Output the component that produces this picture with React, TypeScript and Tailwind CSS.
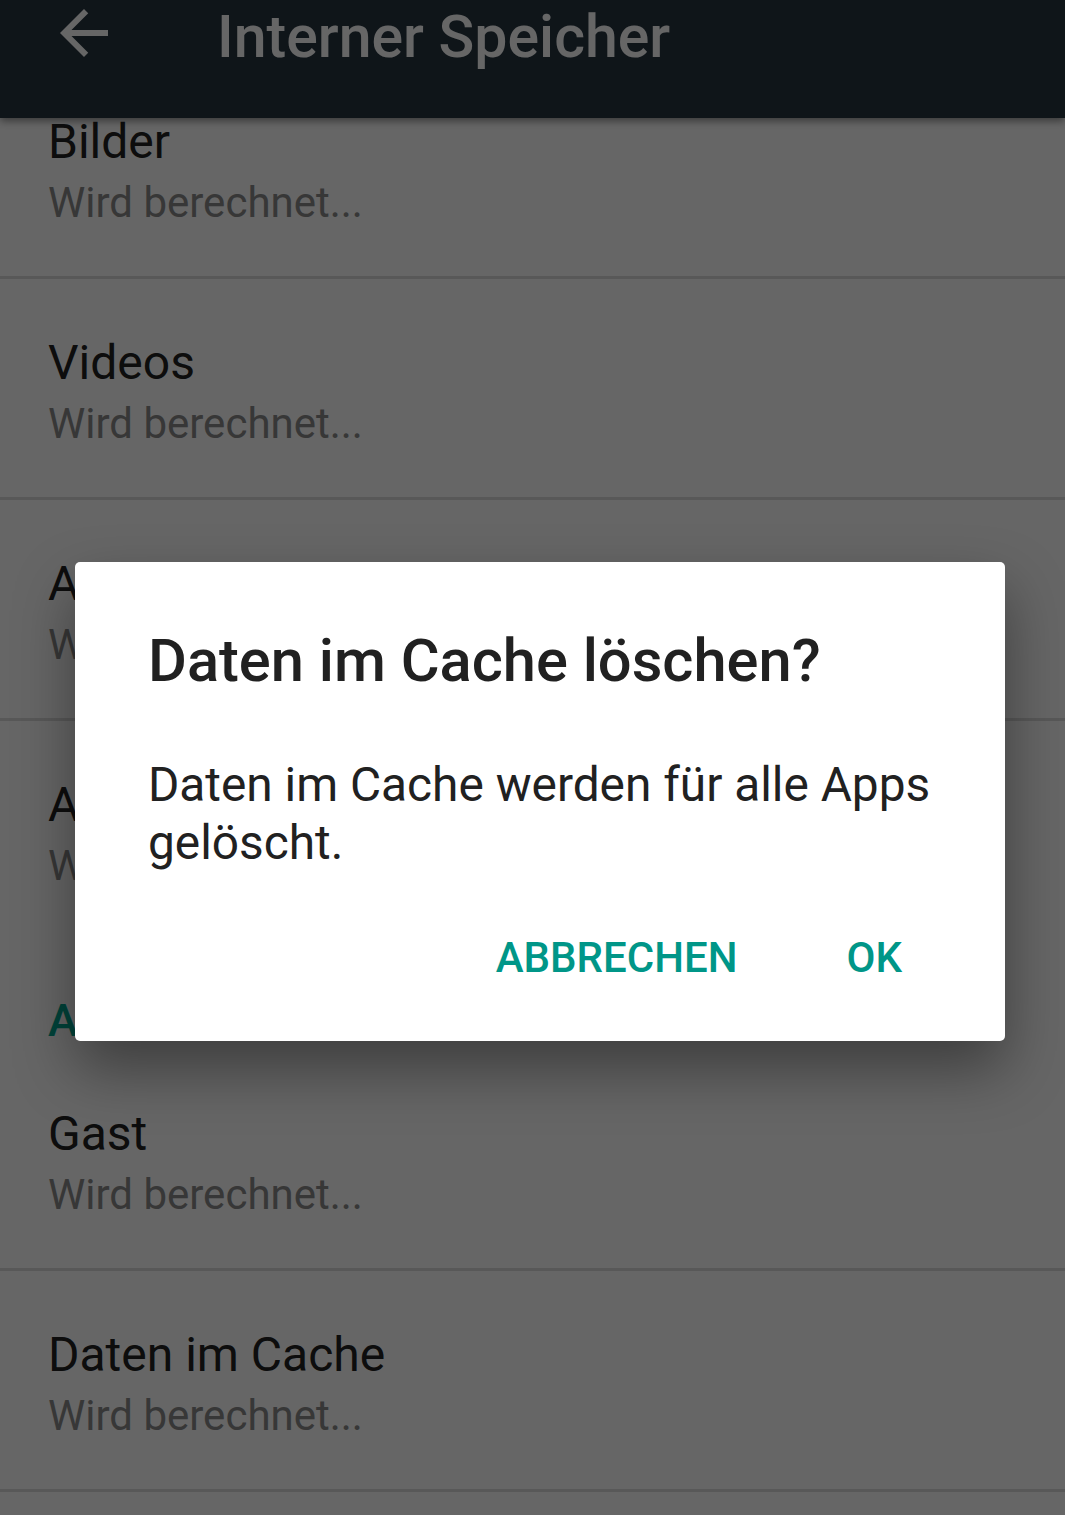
import React from "react";

type Row = { title: string; summary: string; divider?: boolean };

const rowsTop: Row[] = [
  { title: "Bilder", summary: "Wird berechnet...", divider: true },
  { title: "Videos", summary: "Wird berechnet...", divider: true },
  { title: "Audio", summary: "Wird berechnet...", divider: true },
  { title: "Apps", summary: "Wird berechnet...", divider: false },
];

const rowsBottom: Row[] = [
  { title: "Gast", summary: "Wird berechnet...", divider: true },
  { title: "Daten im Cache", summary: "Wird berechnet...", divider: true },
];

function ListRow({ row }: { row: Row }) {
  return (
    <div
      className={
        "h-[221px] pl-[48px] pt-[53px] " +
        (row.divider ? "border-b-[3px] border-[#dcdcdc]" : "")
      }
    >
      <div className="text-[48px] leading-[62px] text-[#212121]">{row.title}</div>
      <div className="text-[42px] leading-[60px] text-[#8a8a8a]">{row.summary}</div>
    </div>
  );
}

function ArrowBack() {
  return (
    <svg viewBox="0 0 24 24" className="w-[72px] h-[72px]" fill="currentColor">
      <path d="M20 11H7.83l5.59-5.59L12 4l-8 8 8 8 1.41-1.41L7.83 13H20v-2z" />
    </svg>
  );
}

export default function App() {
  return (
    <div className="relative w-[1065px] h-[1515px] overflow-hidden bg-white font-[family-name:Roboto,'Liberation_Sans',sans-serif]">
      <header className="relative z-10 h-[118px] bg-[#263540] shadow-[0_3px_8px_rgba(0,0,0,0.45)] flex items-start text-white">
        <div className="ml-[48px] -mt-[3px]">
          <ArrowBack />
        </div>
        <h1 className="ml-[97px] mt-[4px] text-[59px] leading-[66px] font-medium">Interner Speicher</h1>
      </header>

      <main className="-mt-[60px]">
        {rowsTop.map((r) => (
          <ListRow key={r.title} row={r} />
        ))}
        <div className="h-[108px] pl-[48px] pt-[52px]">
          <div className="text-[45px] leading-[54px] font-medium text-[#00a892]">Andere Nutzer</div>
        </div>
        {rowsBottom.map((r) => (
          <ListRow key={r.title} row={r} />
        ))}
      </main>

      {/* scrim */}
      <div className="absolute inset-0 z-20 bg-black/60" />

      {/* dialog */}
      <div className="absolute z-30 left-[75px] top-[562px] w-[930px] h-[479px] bg-white rounded-[5px] shadow-[0_28px_60px_rgba(0,0,0,0.4)] pl-[73px] pr-[60px] pt-[67px]">
        <h2 className="text-[59.6px] leading-[64px] font-medium text-[#212121]">Daten im Cache löschen?</h2>
        <p className="mt-[63px] text-[47.8px] leading-[58px] text-[#212121]">
          Daten im Cache werden für alle Apps gelöscht.
        </p>
        <div className="mt-[62px] flex justify-end gap-[109px] pr-[43px] text-[42px] leading-[48px] font-medium text-[#009688]">
          <span>ABBRECHEN</span>
          <span>OK</span>
        </div>
      </div>
    </div>
  );
}
